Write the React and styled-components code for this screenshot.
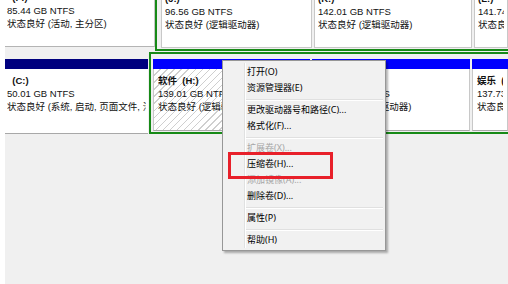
import styled, { createGlobalStyle, css } from "styled-components";

const GlobalStyle = createGlobalStyle`
  html, body {
    margin: 0;
    padding: 0;
    background: #f0f0f0;
  }
  body {
    font-family: "Noto Sans", "Noto Sans CJK SC", sans-serif;
  }
`;

const GREEN = "#178a17";

const Screen = styled.div`
  position: relative;
  width: 508px;
  height: 284px;
  overflow: hidden;
  display: flex;
  background: #f0f0f0;
`;

const LeftStrip = styled.div`
  flex: none;
  width: 5px;
  background: #fff;
`;

const Disks = styled.div`
  flex: 1;
  min-width: 0;
  display: flex;
  flex-direction: column;
`;

const TopRow = styled.div`
  display: flex;
  height: 64px;
  margin-top: -13px;
`;

const BottomRow = styled.div`
  display: flex;
  height: 82px;
  margin-top: 1px;
`;

const Line = styled.div`
  font-family: "Liberation Sans", "Noto Sans CJK SC", sans-serif;
  font-size: 9.5px;
  line-height: 13px;
  color: #111;
  white-space: pre;
  overflow: hidden;
  font-weight: ${(p) => (p.$bold ? "bold" : "normal")};
`;

const PrimaryTop = styled.div`
  flex: none;
  width: 150px;
  height: 60px;
  box-sizing: border-box;
  padding: 4px 2px;
  background: #fff;
  border-right: 1px solid #c6c6c6;
  border-bottom: 1px solid #b4b4b4;
`;

const Extended = styled.div`
  flex: 1;
  min-width: 0;
  display: flex;
  gap: ${(p) => p.$gap}px;
  box-sizing: border-box;
  border: 2px solid ${GREEN};
  border-right: none;
  padding: ${(p) => p.$pad};
  background: #f0f0f0;
`;

const TopPart = styled.div`
  flex: ${(p) => (p.$width ? "none" : "1")};
  width: ${(p) => (p.$width ? `${p.$width}px` : "auto")};
  min-width: 0;
  box-sizing: border-box;
  padding: 2px 3px;
  background: #fff;
  border: 1px solid #c8c8c8;
`;

const Column = styled.div`
  flex: ${(p) => (p.$width ? "none" : "1")};
  width: ${(p) => (p.$width ? `${p.$width}px` : "auto")};
  min-width: 0;
  display: flex;
  flex-direction: column;
  margin-top: ${(p) => p.$offset || 0}px;
  margin-right: ${(p) => p.$right || 0}px;
`;

const Header = styled.div`
  flex: none;
  height: 10px;
  background: ${(p) => (p.$primary ? "#00007e" : "#0000fe")};
`;

const Body = styled.div`
  flex: 1;
  box-sizing: border-box;
  padding: 5px ${(p) => (p.$primary ? "2px" : "4px")} 0;
  background: #fff;
  border-bottom: 1px solid #a8a8a8;
  ${(p) =>
    !p.$primary &&
    css`
      border-left: 1px solid #c8c8c8;
      border-right: 1px solid #c8c8c8;
    `}
  ${(p) =>
    p.$selected &&
    css`
      background: repeating-linear-gradient(
        135deg,
        #ffffff 0,
        #ffffff 4px,
        #cfcfcf 4px,
        #cfcfcf 5px
      );
    `}
`;

const Menu = styled.div`
  position: absolute;
  left: 222px;
  top: 60px;
  width: 164px;
  box-sizing: border-box;
  padding: 3px 2px 2px;
  background: #f1f1f1;
  border: 1px solid #979797;
  box-shadow: 2px 2px 2px rgba(0, 0, 0, 0.3);

  &::before {
    content: "";
    position: absolute;
    left: 21px;
    top: 2px;
    bottom: 2px;
    width: 1px;
    background: #e0e1e1;
    box-shadow: 1px 0 0 #fff;
  }
`;

const Item = styled.div`
  position: relative;
  height: 16px;
  line-height: 16px;
  padding-left: 22px;
  font-size: 9px;
  white-space: nowrap;
  color: ${(p) => (p.$disabled ? "#a6a6a6" : "#000")};
`;

const Separator = styled.div`
  height: 6px;
  margin-left: 21px;
  display: flex;
  align-items: center;

  &::after {
    content: "";
    flex: 1;
    height: 1px;
    background: #e0e0e0;
    box-shadow: 0 1px 0 #fff;
  }
`;

const RedBox = styled.div`
  position: absolute;
  left: 228px;
  top: 152px;
  width: 105px;
  height: 27px;
  box-sizing: border-box;
  border: 3px solid #e8202a;
`;

const topParts = [
  { name: "(J:)", size: "96.56 GB NTFS", status: "状态良好 (逻辑驱动器)", width: 151 },
  { name: "(K:)", size: "142.01 GB NTFS", status: "状态良好 (逻辑驱动器)", width: 158 },
  { name: "(L:)", size: "141.74 GB NTFS", status: "状态良好 (逻辑驱动器)" },
];

const bottomParts = [
  { name: "软件  (H:)", size: "139.01 GB NTFS", status: "状态良好 (逻辑驱动器)", width: 157, selected: true },
  { name: "文档  (I:)", size: "139.82 GB NTFS", status: "状态良好 (逻辑驱动器)", width: 158 },
  { name: "娱乐  (G:)", size: "137.73 GB NTFS", status: "状态良好 (逻辑驱动器)" },
];

const menuItems = [
  { label: "打开(O)" },
  { label: "资源管理器(E)" },
  "sep",
  { label: "更改驱动器号和路径(C)..." },
  { label: "格式化(F)..." },
  "sep",
  { label: "扩展卷(X)...", disabled: true },
  { label: "压缩卷(H)..." },
  { label: "添加镜像(A)...", disabled: true },
  { label: "删除卷(D)..." },
  "sep",
  { label: "属性(P)" },
  "sep",
  { label: "帮助(H)" },
];

const App = () => {
  return (
    <>
      <GlobalStyle />
      <Screen>
        <LeftStrip />
        <Disks>
          <TopRow>
            <PrimaryTop>
              <Line $bold>  (F:)</Line>
              <Line>85.44 GB NTFS</Line>
              <Line>状态良好 (活动, 主分区)</Line>
            </PrimaryTop>
            <Extended $gap={2} $pad="0 0 1px 4px">
              {topParts.map((p) => (
                <TopPart key={p.size} $width={p.width}>
                  <Line $bold>{p.name}</Line>
                  <Line>{p.size}</Line>
                  <Line>{p.status}</Line>
                </TopPart>
              ))}
            </Extended>
          </TopRow>
          <BottomRow>
            <Column $width={143} $offset={7} $right={1}>
              <Header $primary />
              <Body $primary>
                <Line $bold>  (C:)</Line>
                <Line>50.01 GB NTFS</Line>
                <Line>状态良好 (系统, 启动, 页面文件, 活动, 故障转储, 主分区)</Line>
              </Body>
            </Column>
            <Extended $gap={2} $pad="5px 0 1px 2px">
              {bottomParts.map((p) => (
                <Column key={p.size} $width={p.width}>
                  <Header />
                  <Body $selected={p.selected}>
                    <Line $bold>{p.name}</Line>
                    <Line>{p.size}</Line>
                    <Line>{p.status}</Line>
                  </Body>
                </Column>
              ))}
            </Extended>
          </BottomRow>
        </Disks>
        <Menu>
          {menuItems.map((m, i) =>
            m === "sep" ? (
              <Separator key={i} />
            ) : (
              <Item key={i} $disabled={m.disabled}>
                {m.label}
              </Item>
            )
          )}
        </Menu>
        <RedBox />
      </Screen>
    </>
  );
};

export default App;
